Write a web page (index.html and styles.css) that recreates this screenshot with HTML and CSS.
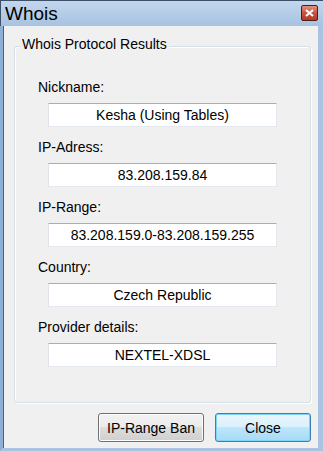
FILE: index.html
```html
<!DOCTYPE html>
<html lang="en">
<head>
<meta charset="UTF-8">
<title>Whois</title>
<link rel="stylesheet" href="styles.css">
</head>
<body>
<div class="window">
    <div class="titlebar">
        <span class="title">Whois</span>
        <div class="close-x">
            <svg width="9" height="8" viewBox="0 0 9 8"><path d="M1 1 L8 7 M8 1 L1 7" stroke="#fff" stroke-width="2"/></svg>
        </div>
    </div>
    <div class="content">
        <div class="groupbox">
            <span class="legend">Whois Protocol Results</span>
            <div class="row">
                <div class="label">Nickname:</div>
                <div class="field">Kesha (Using Tables)</div>
            </div>
            <div class="row">
                <div class="label">IP-Adress:</div>
                <div class="field">83.208.159.84</div>
            </div>
            <div class="row">
                <div class="label">IP-Range:</div>
                <div class="field">83.208.159.0-83.208.159.255</div>
            </div>
            <div class="row">
                <div class="label">Country:</div>
                <div class="field">Czech Republic</div>
            </div>
            <div class="row">
                <div class="label">Provider details:</div>
                <div class="field">NEXTEL-XDSL</div>
            </div>
        </div>
        <div class="buttons">
            <button class="btn">IP-Range Ban</button>
            <button class="btn btn-default">Close</button>
        </div>
    </div>
</div>
</body>
</html>
```

FILE: styles.css
```css
body {
    margin: 0;
    padding: 0;
    background-color: #f0f0f0;
    font-family: "Liberation Sans", Arial, sans-serif;
}

.window {
    width: 323px;
    height: 451px;
    box-sizing: border-box;
    border-left: 3px solid #8fb0d6;
    border-right: 5px solid #a9c3e0;
    border-bottom: 3px solid #a9c3e0;
    box-shadow: inset 1px 0 0 #4a5f7a;
    display: flex;
    flex-direction: column;
    background: #f0f0f0;
}

.titlebar {
    height: 26px;
    margin-left: -3px;
    margin-right: -5px;
    padding: 0 5px 0 4px;
    box-sizing: border-box;
    border-top: 1px solid #3e5068;
    border-left: 1px solid #3e5068;
    background: linear-gradient(#c2d7ee, #a7c2e0);
    display: flex;
    justify-content: space-between;
    align-items: flex-start;
}

.title {
    font-size: 19px;
    line-height: 24px;
    padding-top: 1px;
    color: #000;
}

.close-x {
    width: 17px;
    height: 16px;
    margin-top: 4px;
    box-sizing: border-box;
    border: 1px solid #4e1b1b;
    border-radius: 2px;
    background: linear-gradient(#e09382, #c9523c 50%, #b63a25);
    display: flex;
    justify-content: center;
    align-items: center;
}

.content {
    flex: 1;
    padding: 20px 7px 0 11px;
}

.groupbox {
    position: relative;
    height: 357px;
    box-sizing: border-box;
    border: 1px solid #d5dfe5;
    border-radius: 3px;
    box-shadow: inset 1px 1px 0 #fff, 1px 1px 0 #fff;
    padding: 32px 0 0 23px;
}

.legend {
    position: absolute;
    top: -11px;
    left: 5px;
    padding: 0 2px;
    background: #f0f0f0;
    font-size: 14px;
    line-height: 17px;
    color: #000;
}

.row {
    margin-bottom: 12px;
}

.label {
    font-size: 14px;
    line-height: 17px;
    color: #000;
}

.field {
    width: 229px;
    height: 24px;
    box-sizing: border-box;
    margin: 7px 0 0 10px;
    background: #fff;
    border: 1px solid #e3e9ef;
    border-top-color: #abadb3;
    border-left-color: #e2e3ea;
    font-size: 14px;
    line-height: 22px;
    text-align: center;
    color: #000;
}

.buttons {
    display: flex;
    justify-content: flex-end;
    gap: 11px;
    margin-top: 10px;
}

.btn {
    width: 106px;
    height: 29px;
    border: 1px solid #707070;
    border-radius: 3px;
    background: linear-gradient(#f2f2f2, #ebebeb 50%, #dddddd 50%, #cfcfcf);
    box-shadow: inset 0 0 0 1px #fcfcfc;
    font-family: "Liberation Sans", Arial, sans-serif;
    font-size: 14px;
    color: #000;
    padding: 0;
}

.btn-default {
    width: 96px;
    border-color: #3c7fb1;
    background: linear-gradient(#eaf6fd, #d9f0fc 50%, #bee6fd 50%, #a7d9f5);
    box-shadow: inset 0 0 0 1px #7ed6f7;
}
```
